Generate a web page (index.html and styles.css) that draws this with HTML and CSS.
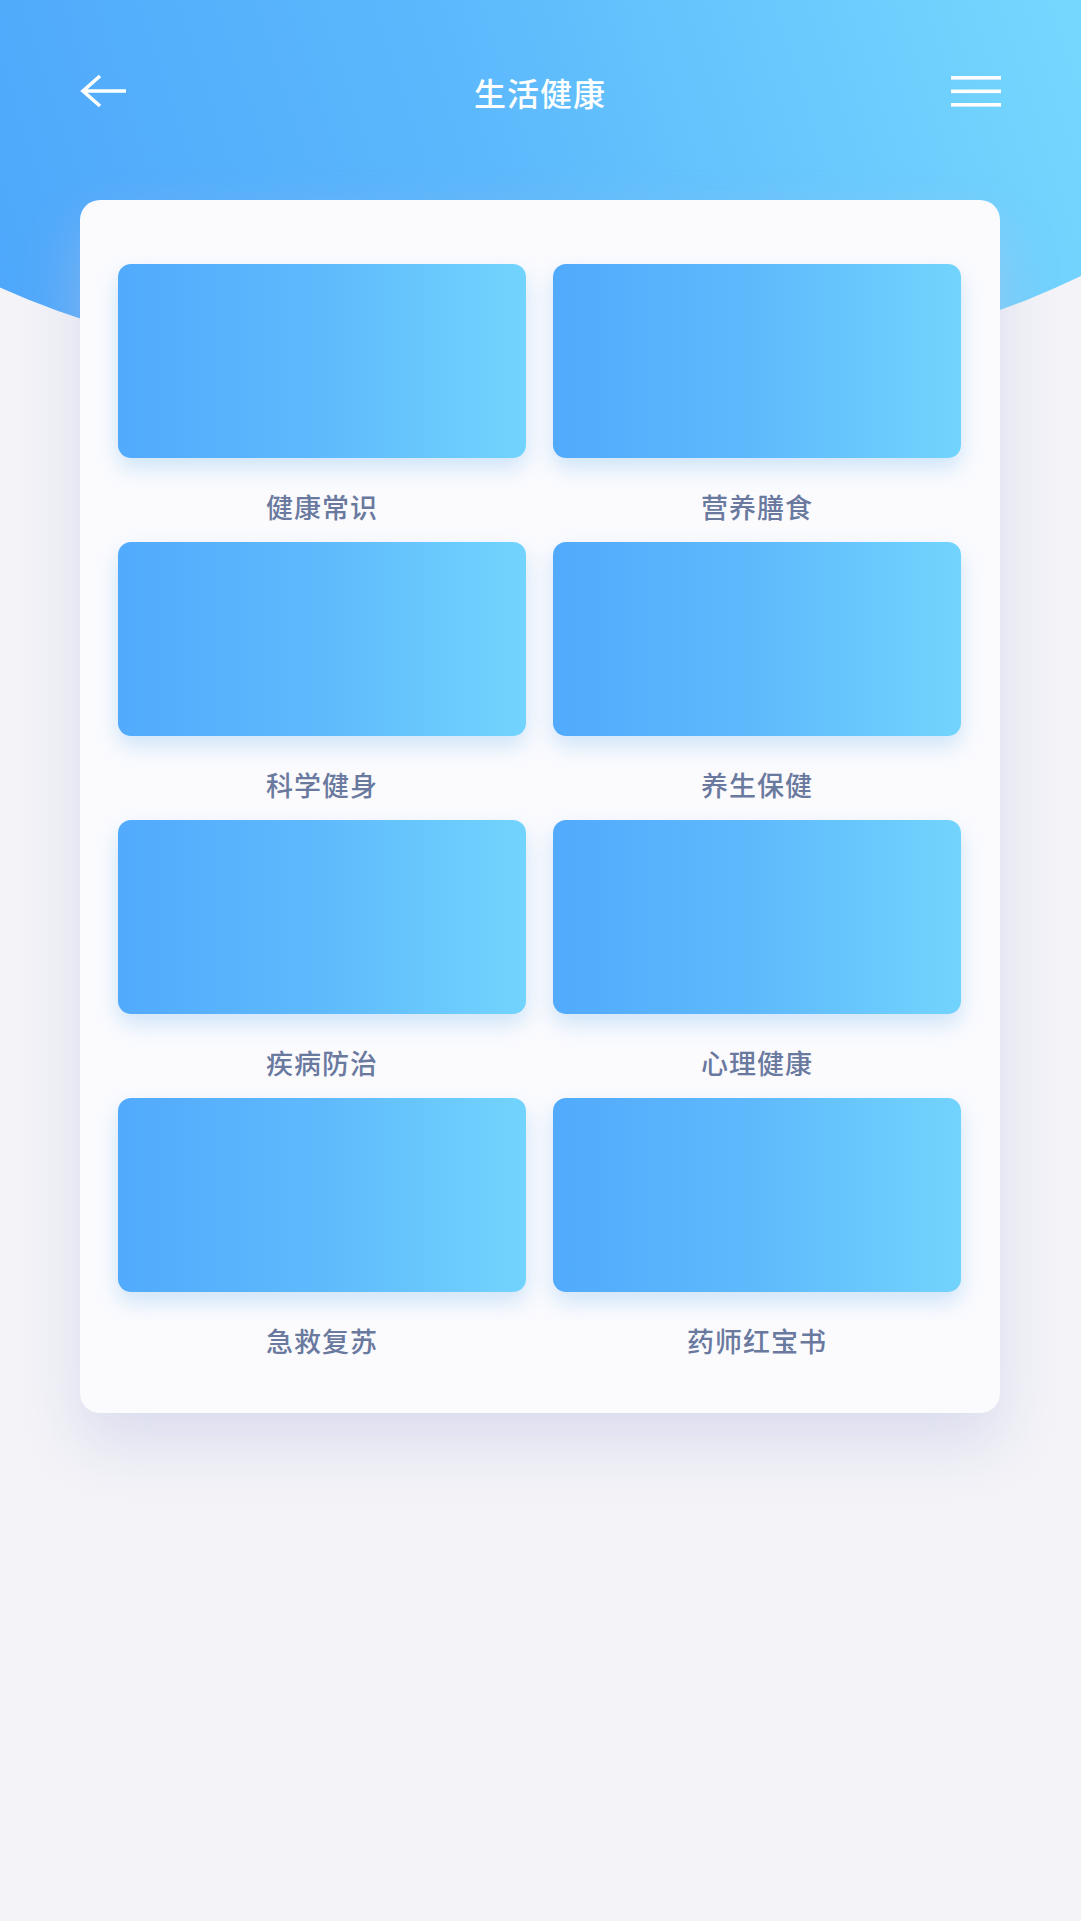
FILE: index.html
```html
<!DOCTYPE html>
<html lang="zh-CN">
<head>
<meta charset="utf-8">
<title>生活健康</title>
<link rel="stylesheet" href="styles.css">
</head>
<body>
<div class="page">
  <div class="hero-bg"></div>
  <header class="topbar">
    <svg class="icon-back" width="50" height="36" viewBox="0 0 50 36">
      <path d="M21 3 L4 18 L21 33 M4 18 H47" fill="none" stroke="#fff" stroke-width="3.6" stroke-linecap="butt" stroke-linejoin="miter"/>
    </svg>
    <h1 class="title">生活健康</h1>
    <svg class="icon-menu" width="50" height="32" viewBox="0 0 50 32">
      <rect x="0" y="1" width="50" height="3.6" fill="#fff"/>
      <rect x="0" y="14.5" width="50" height="3.6" fill="#fff"/>
      <rect x="0" y="28" width="50" height="3.6" fill="#fff"/>
    </svg>
  </header>
  <main class="card">
    <div class="grid">
      <a class="item"><div class="tile"></div><span class="label">健康常识</span></a>
      <a class="item"><div class="tile"></div><span class="label">营养膳食</span></a>
      <a class="item"><div class="tile"></div><span class="label">科学健身</span></a>
      <a class="item"><div class="tile"></div><span class="label">养生保健</span></a>
      <a class="item"><div class="tile"></div><span class="label">疾病防治</span></a>
      <a class="item"><div class="tile"></div><span class="label">心理健康</span></a>
      <a class="item"><div class="tile"></div><span class="label">急救复苏</span></a>
      <a class="item"><div class="tile"></div><span class="label">药师红宝书</span></a>
    </div>
  </main>
</div>
</body>
</html>
```

FILE: styles.css
```css
* { box-sizing: border-box; }
html, body {
  margin: 0;
  padding: 0;
}
body {
  background: #f3f3f8;
  font-family: "Noto Sans CJK SC", "Noto Sans", sans-serif;
  overflow-x: hidden;
}
.page {
  position: relative;
  width: 1081px;
  min-height: 1921px;
  overflow: hidden;
  background: #f3f3f8;
}
.hero-bg {
  position: absolute;
  left: -261px;
  top: 0;
  width: 1578px;
  height: 387px;
  border-radius: 0 0 789px 789px / 0 0 387px 387px;
  background: linear-gradient(72deg, #4ea7fb 16%, #5cb8fc 48%, #75d7fe 85%);
  z-index: 0;
}
.topbar {
  position: relative;
  z-index: 1;
  height: 182px;
  display: flex;
  align-items: center;
  justify-content: space-between;
  padding: 0 80px 0 79px;
}
.icon-back { display: block; }
.icon-menu { display: block; margin-top: -1px; }
.title {
  margin: 0;
  padding-top: 1px;
  font-size: 32px;
  font-weight: 500;
  line-height: 1;
  color: #ffffff;
  letter-spacing: 1px;
}
.card {
  position: relative;
  z-index: 1;
  margin: 18px 0 0 80px;
  width: 920px;
  background: #fbfbfe;
  border-radius: 20px;
  padding: 64px 39px 52px 38px;
  box-shadow: 0 30px 60px rgba(190, 194, 226, 0.45);
}
.grid {
  display: grid;
  grid-template-columns: 408px 408px;
  column-gap: 27px;
  row-gap: 15px;
}
.item {
  display: flex;
  flex-direction: column;
  align-items: center;
  text-decoration: none;
}
.tile {
  width: 408px;
  height: 194px;
  border-radius: 13px;
  background: linear-gradient(90deg, #51aafc 0%, #5fbafc 50%, #72d4fd 100%);
  box-shadow: 0 10px 22px rgba(90, 170, 235, 0.28);
}
.label {
  margin-top: 29px;
  height: 40px;
  line-height: 40px;
  font-size: 27px;
  font-weight: 500;
  letter-spacing: 1px;
  color: #6a799e;
}
```
